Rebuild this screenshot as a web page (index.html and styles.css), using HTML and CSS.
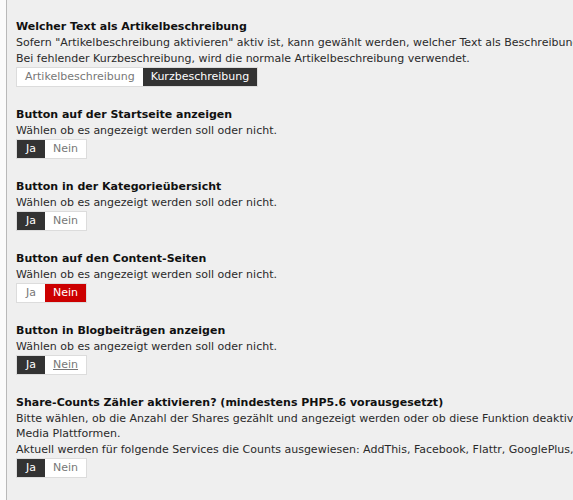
FILE: index.html
```html
<!DOCTYPE html>
<html lang="de">
<head>
<meta charset="utf-8">
<title>Einstellungen</title>
<link rel="stylesheet" href="styles.css">
</head>
<body>
<div class="page">
  <div class="strip"></div>
  <div class="content">
    <div class="field">
      <div class="label">Welcher Text als Artikelbeschreibung</div>
      <div class="desc">Sofern "Artikelbeschreibung aktivieren" aktiv ist, kann gewählt werden, welcher Text als Beschreibung verwendet werden soll.</div>
      <div class="desc">Bei fehlender Kurzbeschreibung, wird die normale Artikelbeschreibung verwendet.</div>
      <div class="group">
        <span class="btn">Artikelbeschreibung</span><span class="btn on">Kurzbeschreibung</span>
      </div>
    </div>
    <div class="field">
      <div class="label">Button auf der Startseite anzeigen</div>
      <div class="desc">Wählen ob es angezeigt werden soll oder nicht.</div>
      <div class="group"><span class="btn on">Ja</span><span class="btn">Nein</span></div>
    </div>
    <div class="field">
      <div class="label">Button in der Kategorieübersicht</div>
      <div class="desc">Wählen ob es angezeigt werden soll oder nicht.</div>
      <div class="group"><span class="btn on">Ja</span><span class="btn">Nein</span></div>
    </div>
    <div class="field">
      <div class="label">Button auf den Content-Seiten</div>
      <div class="desc">Wählen ob es angezeigt werden soll oder nicht.</div>
      <div class="group"><span class="btn">Ja</span><span class="btn off">Nein</span></div>
    </div>
    <div class="field">
      <div class="label">Button in Blogbeiträgen anzeigen</div>
      <div class="desc">Wählen ob es angezeigt werden soll oder nicht.</div>
      <div class="group"><span class="btn on">Ja</span><span class="btn hover">Nein</span></div>
    </div>
    <div class="field">
      <div class="label">Share-Counts Zähler aktivieren? (mindestens PHP5.6 vorausgesetzt)</div>
      <div class="desc">Bitte wählen, ob die Anzahl der Shares gezählt und angezeigt werden oder ob diese Funktion deaktiviert werden soll für die Social</div>
      <div class="desc">Media Plattformen.</div>
      <div class="desc">Aktuell werden für folgende Services die Counts ausgewiesen: AddThis, Facebook, Flattr, GooglePlus, LinkedIn, Pinterest</div>
      <div class="group"><span class="btn on">Ja</span><span class="btn">Nein</span></div>
    </div>
  </div>
</div>
</body>
</html>
```
FILE: styles.css
```css
html, body {
  margin: 0;
  padding: 0;
  background: #efefef;
  overflow: hidden;
}
body {
  font-family: "DejaVu Sans", Verdana, sans-serif;
  font-size: 11px;
  color: #222;
}
.page {
  display: flex;
  min-height: 500px;
}
.strip {
  flex: 0 0 6px;
  background: #fbfbfb;
  border-right: 1px solid #b9b9b9;
}
.content {
  padding: 19px 0 0 9px;
  display: flex;
  flex-direction: column;
  gap: 19.5px;
  white-space: nowrap;
}
.field {
  display: flex;
  flex-direction: column;
}
.label {
  font-weight: bold;
  line-height: 16px;
  color: #111;
}
.desc {
  line-height: 15.5px;
  color: #2a2a2a;
}
.group {
  display: inline-flex;
  align-self: flex-start;
  margin-top: 1px;
  border: 1px solid #dcdcdc;
  background: #fff;
}
.btn {
  box-sizing: border-box;
  min-width: 28px;
  text-align: center;
  line-height: 18px;
  padding: 0 8px;
  color: #777;
  background: #fff;
}
.btn.on {
  background: #333;
  color: #fff;
}
.btn.off {
  background: #cc0000;
  color: #fff;
}
.btn.hover {
  text-decoration: underline;
}
```
